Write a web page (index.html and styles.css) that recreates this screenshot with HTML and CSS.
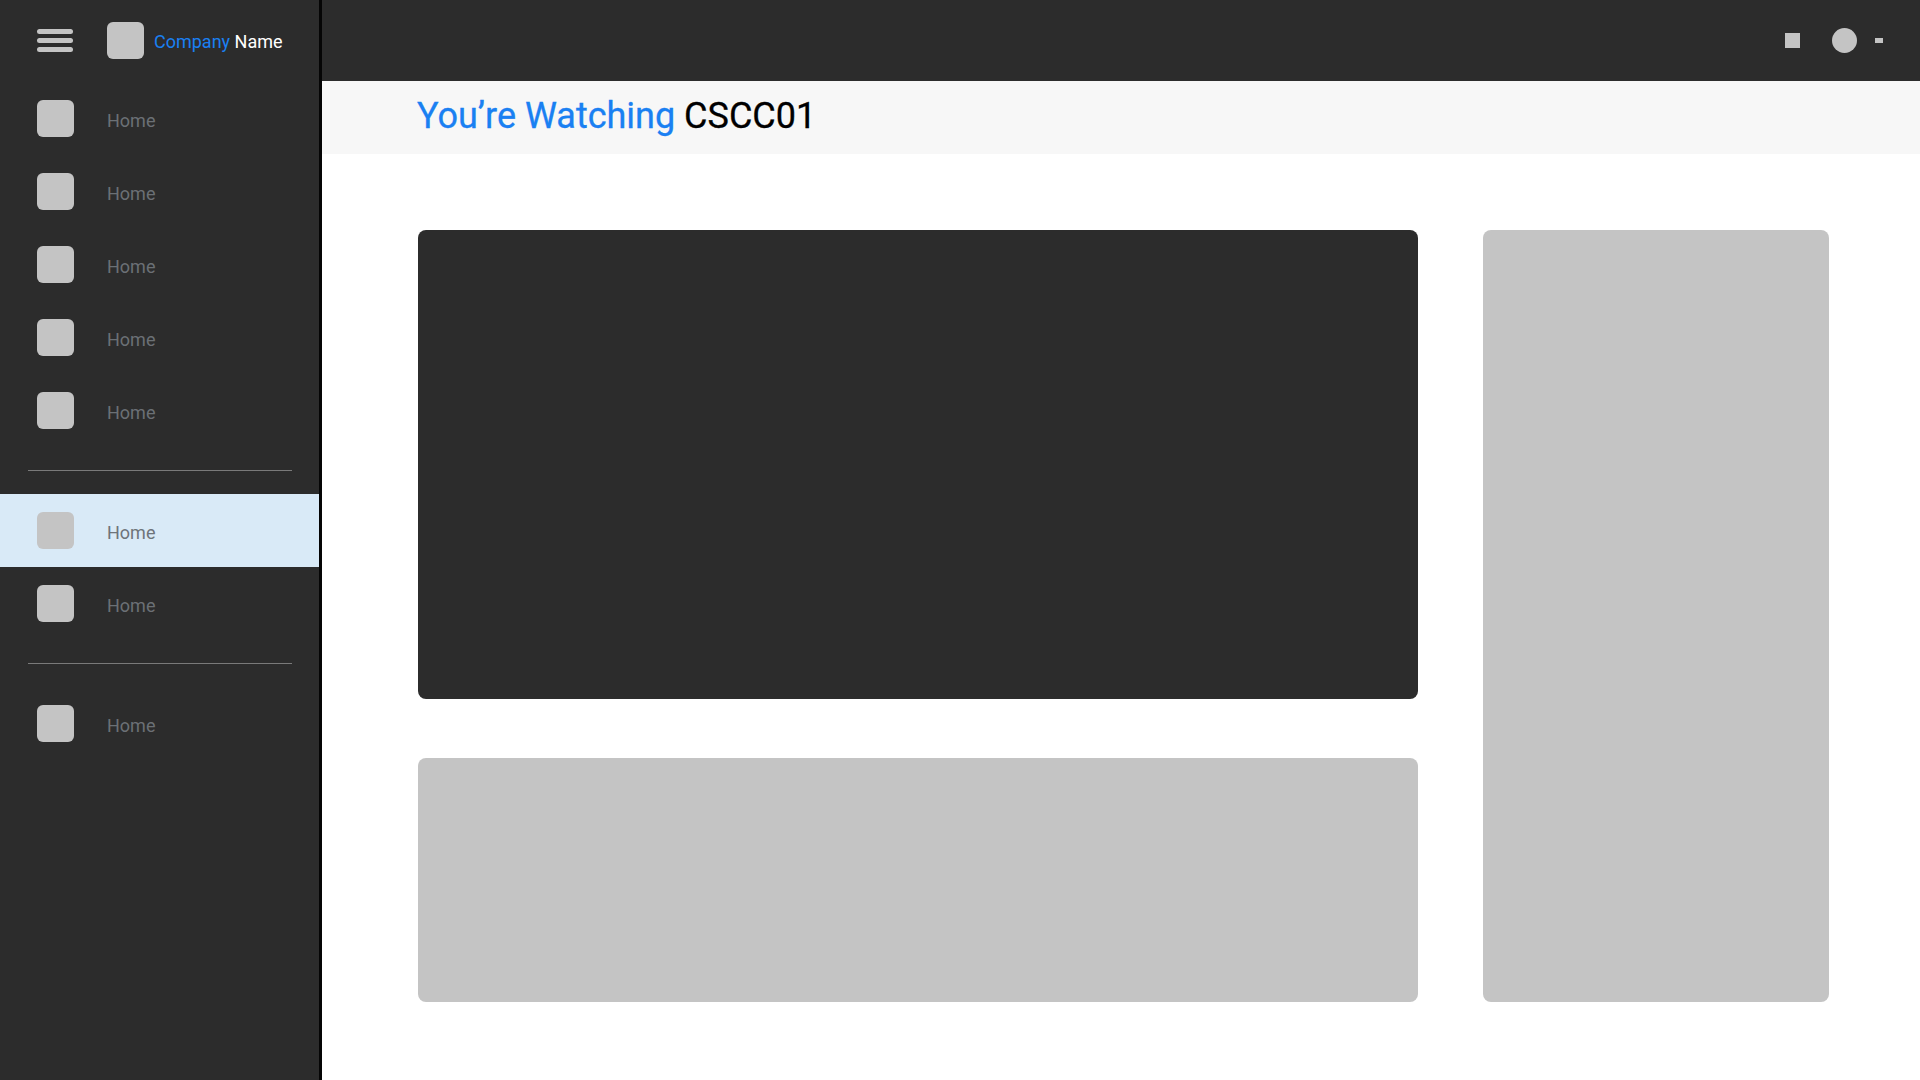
FILE: index.html
```html
<!DOCTYPE html>
<html>
<head>
<meta charset="utf-8">
<link rel="stylesheet" href="styles.css">
</head>
<body>
<div class="app">
  <aside class="sidebar">
    <div class="brand">
      <div class="hamburger"><span></span><span></span><span></span></div>
      <div class="logo"></div>
      <div class="brand-name"><span class="blue">Company</span> Name</div>
    </div>
    <nav class="group">
      <div class="item"><div class="ico"></div><span>Home</span></div>
      <div class="item"><div class="ico"></div><span>Home</span></div>
      <div class="item"><div class="ico"></div><span>Home</span></div>
      <div class="item"><div class="ico"></div><span>Home</span></div>
      <div class="item"><div class="ico"></div><span>Home</span></div>
    </nav>
    <div class="divider"></div>
    <nav class="group">
      <div class="item active"><div class="ico"></div><span>Home</span></div>
      <div class="item"><div class="ico"></div><span>Home</span></div>
    </nav>
    <div class="divider"></div>
    <nav class="group">
      <div class="item"><div class="ico"></div><span>Home</span></div>
    </nav>
  </aside>
  <main class="main">
    <header class="topbar">
      <div class="tb-square"></div>
      <div class="tb-circle"></div>
      <div class="tb-dash"></div>
    </header>
    <div class="title-band">
      <h1><span class="blue">You’re Watching</span> CSCC01</h1>
    </div>
    <section class="content">
      <div class="left-col">
        <div class="video"></div>
        <div class="below"></div>
      </div>
      <div class="side-panel"></div>
    </section>
  </main>
</div>
</body>
</html>
```

FILE: styles.css
```css
* { box-sizing: border-box; margin: 0; padding: 0; }
html, body { width: 1920px; height: 1080px; overflow: hidden; }
body { font-family: Roboto, "Liberation Sans", sans-serif; background: #fff; }
.blue { color: #1a80f2; }

.app { display: flex; height: 1080px; }

.sidebar {
  width: 322px;
  flex: none;
  background: #2c2c2c;
  border-right: 3px solid #050505;
  display: flex;
  flex-direction: column;
}
.brand {
  height: 81px;
  display: flex;
  align-items: center;
  padding-left: 37px;
}
.hamburger {
  width: 36px;
  display: flex;
  flex-direction: column;
  gap: 4px;
  margin-right: 34px;
}
.hamburger span {
  display: block;
  height: 5px;
  border-radius: 2.5px;
  background: #c4c4c4;
}
.logo {
  width: 37px;
  height: 37px;
  border-radius: 6px;
  background: #c4c4c4;
  margin-right: 10px;
}
.brand-name {
  font-size: 18px;
  font-weight: 400;
  color: #ffffff;
  padding-top: 2px;
}

.group { display: flex; flex-direction: column; }
.item {
  height: 73px;
  display: flex;
  align-items: center;
  padding-left: 37px;
  font-size: 18px;
  color: #6b7075;
}
.item span { padding-top: 3px; }
.item .ico {
  width: 37px;
  height: 37px;
  border-radius: 6px;
  background: #c4c4c4;
  margin-right: 33px;
}
.group:first-of-type .item:first-child { margin-top: 1px; }
.item.active { background: #d9eaf7; color: #6e747a; }

.divider {
  height: 1px;
  background: #7a7a7a;
  margin: 23px 27px 23px 28px;
}

.main { flex: 1; display: flex; flex-direction: column; min-width: 0; }
.topbar {
  height: 81px;
  background: #2c2c2c;
  display: flex;
  align-items: center;
  justify-content: flex-end;
  padding-right: 37px;
}
.tb-square { width: 15px; height: 15px; background: #c4c4c4; margin-right: 32px; }
.tb-circle { width: 25px; height: 25px; border-radius: 50%; background: #c4c4c4; margin-right: 18px; }
.tb-dash { width: 8px; height: 5px; background: #c4c4c4; }

.title-band {
  height: 73px;
  background: #f7f7f7;
  display: flex;
  align-items: center;
  padding-left: 95px;
}
.title-band h1 {
  font-size: 36px;
  font-weight: 400;
  color: #000;
  line-height: 1;
  padding-bottom: 4px;
  -webkit-text-stroke: 0.3px currentColor;
}

.content {
  display: flex;
  padding: 76px 91px 0 96px;
  gap: 65px;
}
.left-col { width: 1000px; display: flex; flex-direction: column; gap: 59px; }
.video { height: 469px; background: #2c2c2c; border-radius: 8px; }
.below { height: 244px; background: #c4c4c4; border-radius: 8px; }
.side-panel { flex: 1; height: 772px; background: #c4c4c4; border-radius: 8px; }
```
